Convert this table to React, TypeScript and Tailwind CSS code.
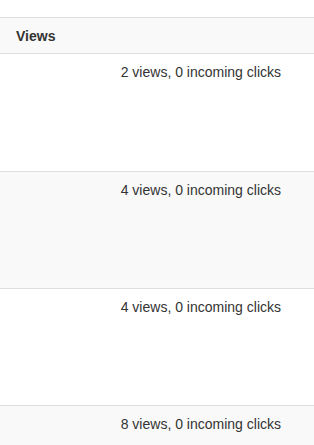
const rows = [
  { views: 2, clicks: 0 },
  { views: 4, clicks: 0 },
  { views: 4, clicks: 0 },
  { views: 8, clicks: 0 },
]

export default function App() {
  return (
    <div className="w-[314px] h-[445px] overflow-hidden bg-white text-[14px] leading-[20px] text-[#333] font-['Liberation_Sans',Arial,sans-serif]">
      <div className="h-[17px]" />
      {/* Header */}
      <div className="h-[37px] border-t border-b border-[#ddd] bg-[#f9f9f9] px-4 flex items-center">
        <span className="font-bold">Views</span>
      </div>
      {/* Rows */}
      {rows.map((r, i) => (
        <div
          key={i}
          className={`${i === 0 ? "h-[117px]" : "h-[117px] border-t border-[#ddd]"} ${i % 2 === 1 ? "bg-[#f9f9f9]" : "bg-white"} pt-[8px] pr-[33px] text-right`}
        >
          {r.views} views, {r.clicks} incoming clicks
        </div>
      ))}
    </div>
  )
}
